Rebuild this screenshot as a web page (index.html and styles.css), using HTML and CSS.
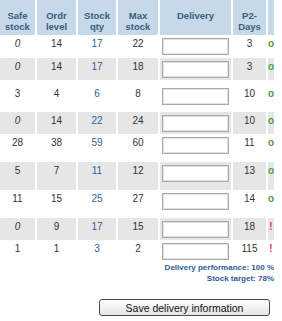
FILE: index.html
```html
<!DOCTYPE html>
<html lang="en">
<head>
  <meta charset="UTF-8" />
  <title>Delivery</title>
  <link rel="stylesheet" href="styles.css">
</head>
<body>
  <div class="panel">
    <table class="stock-table">
      <colgroup>
        <col class="c-safe"><col class="c-ordr"><col class="c-qty"><col class="c-max">
        <col class="c-delivery"><col class="c-days"><col class="c-flag">
      </colgroup>
      <thead>
        <tr>
          <th>Safe<br>stock</th>
          <th>Ordr<br>level</th>
          <th>Stock<br>qty</th>
          <th>Max<br>stock</th>
          <th>Delivery</th>
          <th>P2-<br>Days</th>
          <th></th>
        </tr>
      </thead>
      <tbody>
        <tr class="row-first">
          <td><em>0</em></td><td>14</td><td class="qty">17</td><td>22</td>
          <td><input type="text" class="delivery-input"></td><td>3</td><td class="ok">o</td>
        </tr>
        <tr class="shade">
          <td><em>0</em></td><td>14</td><td class="qty">17</td><td>18</td>
          <td><input type="text" class="delivery-input"></td><td>3</td><td class="ok">o</td>
        </tr>
        <tr class="row-spaced">
          <td>3</td><td>4</td><td class="qty">6</td><td>8</td>
          <td><input type="text" class="delivery-input"></td><td>10</td><td class="ok">o</td>
        </tr>
        <tr class="shade">
          <td><em>0</em></td><td>14</td><td class="qty">22</td><td>24</td>
          <td><input type="text" class="delivery-input"></td><td>10</td><td class="ok">o</td>
        </tr>
        <tr class="row-wide">
          <td>28</td><td>38</td><td class="qty">59</td><td>60</td>
          <td><input type="text" class="delivery-input"></td><td>11</td><td class="ok">o</td>
        </tr>
        <tr class="shade row-wide">
          <td>5</td><td>7</td><td class="qty">11</td><td>12</td>
          <td><input type="text" class="delivery-input"></td><td>13</td><td class="ok">o</td>
        </tr>
        <tr class="row-wide">
          <td>11</td><td>15</td><td class="qty">25</td><td>27</td>
          <td><input type="text" class="delivery-input"></td><td>14</td><td class="ok">o</td>
        </tr>
        <tr class="shade">
          <td><em>0</em></td><td>9</td><td class="qty">17</td><td>15</td>
          <td><input type="text" class="delivery-input"></td><td>18</td><td class="alert">!</td>
        </tr>
        <tr>
          <td>1</td><td>1</td><td class="qty">3</td><td>2</td>
          <td><input type="text" class="delivery-input"></td><td>115</td><td class="alert">!</td>
        </tr>
      </tbody>
    </table>

    <div class="summary">
      <div>Delivery performance: 100 %</div>
      <div>Stock target: 78%</div>
    </div>

    <div class="actions">
      <button type="button" class="save-btn">Save delivery information</button>
    </div>
  </div>
</body>
</html>
```

FILE: styles.css
```css
body {
  margin: 0;
  font-family: 'Liberation Sans', Arial, sans-serif;
  font-size: 10px;
  color: #333;
  background: #fff;
}

.panel {
  width: 274px;
}

.stock-table {
  border-collapse: separate;
  border-spacing: 2px 0;
  margin-left: -2px;
  table-layout: fixed;
  width: 278px;
}

.c-safe { width: 35px; }
.c-ordr { width: 39px; }
.c-qty { width: 38px; }
.c-max { width: 40px; }
.c-delivery { width: 71px; }
.c-days { width: 33px; }
.c-flag { width: 6px; }

.stock-table th {
  height: 35px;
  box-sizing: border-box;
  padding: 10px 0 0;
  vertical-align: top;
  background: #c5d9e8;
  color: #3b5d7e;
  font-size: 9.5px;
  font-weight: bold;
  line-height: 11px;
  text-align: center;
}

.stock-table tbody tr {
  height: 22px;
}

.stock-table tr.row-first { height: 23px; }
.stock-table tr.row-wide { height: 28px; }
.stock-table tr.row-spaced { height: 32px; }

.stock-table td {
  padding: 3px 0 0;
  vertical-align: top;
  text-align: center;
  line-height: 12px;
  font-size: 10px;
}

.stock-table tr.row-spaced td {
  padding-top: 8px;
}

.stock-table tr.shade td {
  background: #e6e6e6;
}

.stock-table em {
  font-style: italic;
}

.qty {
  color: #2d5f9c;
}

.ok {
  color: #4f9a3f;
  font-weight: bold;
}

.alert {
  color: #e0405c;
  font-weight: bold;
}

.delivery-input {
  display: block;
  box-sizing: border-box;
  width: 67px;
  height: 17px;
  margin: 0 auto;
  padding: 0;
  border: 1px solid #a9a9a9;
  box-shadow: inset 0 0 0 1px #e2e2e2;
  background: #fff;
}

.summary {
  text-align: right;
  color: #2d5b96;
  font-size: 8px;
  font-weight: bold;
  line-height: 11px;
}

.actions {
  display: flex;
  justify-content: flex-end;
  padding-right: 4px;
  margin-top: 15px;
}

.save-btn {
  width: 171px;
  height: 17px;
  padding: 0;
  border: 1px solid #4a4a4a;
  border-radius: 3px;
  background: linear-gradient(#ffffff, #e4e4e4);
  font-family: 'Liberation Sans', Arial, sans-serif;
  font-size: 10.5px;
  color: #111;
}
```
